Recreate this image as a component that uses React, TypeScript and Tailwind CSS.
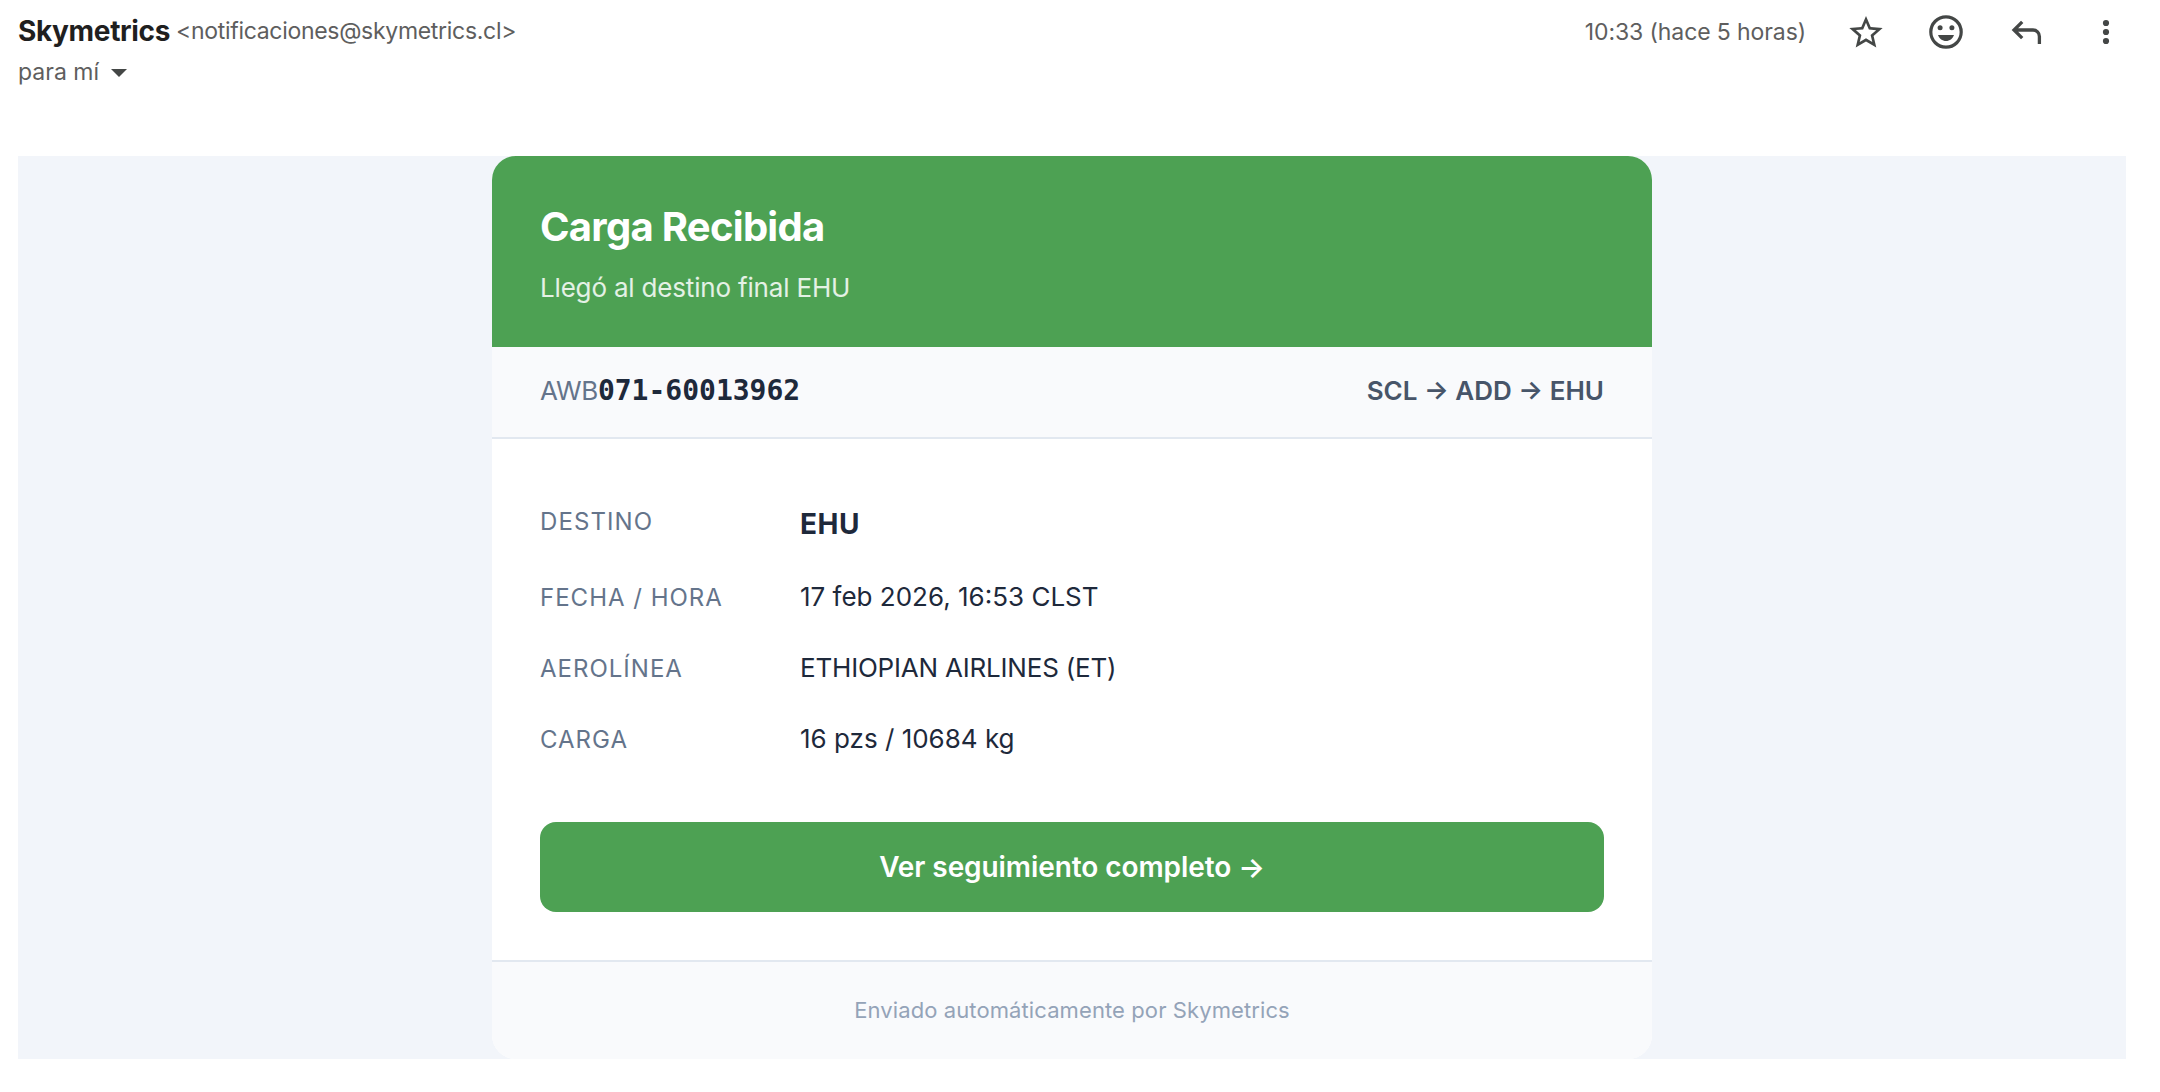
import { ReactNode } from "react";

type DetailRowProps = {
  label: string;
  value: string;
  highlight?: boolean;
};

const details: DetailRowProps[] = [
  { label: "Destino", value: "EHU", highlight: true },
  { label: "Fecha / Hora", value: "17 feb 2026, 16:53 CLST" },
  { label: "Aerolínea", value: "ETHIOPIAN AIRLINES (ET)" },
  { label: "Carga", value: "16 pzs / 10684 kg" },
];

function DetailRow({ label, value, highlight }: DetailRowProps) {
  if (highlight) {
    return (
      <div className="flex items-start py-4">
        <dt className="w-[260px] text-2xl leading-[38px] tracking-[1.1px] text-[#64748b] uppercase">
          {label}
        </dt>
        <dd className="text-[28px] leading-[42px] font-bold tracking-[0.5px]">{value}</dd>
      </div>
    );
  }

  return (
    <div className="flex items-baseline py-4">
      <dt className="w-[260px] text-2xl leading-9 tracking-[1px] text-[#64748b] uppercase">
        {label}
      </dt>
      <dd
        className={
          value === value.toUpperCase()
            ? "text-[26px] leading-[39px] tracking-[-0.2px]"
            : "text-[26px] leading-[39px]"
        }
      >
        {value}
      </dd>
    </div>
  );
}

function IconButton({ label, children }: { label: string; children: ReactNode }) {
  return (
    <button type="button" aria-label={label} className="size-10 text-[#444746]">
      <svg viewBox="0 0 40 40" className="size-10" fill="none" stroke="currentColor">
        {children}
      </svg>
    </button>
  );
}

function MailHeader() {
  return (
    <header className="flex h-[156px] items-start justify-between text-[23px] text-[#5e5e5e]">
      <div>
        <div className="flex h-[62px] items-center">
          <h2 className="text-[28px] font-bold tracking-[-0.35px] text-[#1f1f1f]">Skymetrics</h2>
          <span className="ml-[6px] tracking-[-0.3px]">&lt;notificaciones@skymetrics.cl&gt;</span>
        </div>
        <div className="flex h-5 items-center">
          <span>para mí</span>
          <svg viewBox="0 0 16 8" className="ml-3 mt-px h-2 w-4" fill="#444746">
            <path d="M0 0h16L8 8z" />
          </svg>
        </div>
      </div>
      <div className="flex h-16 items-center gap-10">
        <span className="tracking-[-0.1px]">10:33 (hace 5 horas)</span>
        <IconButton label="Destacar">
          <path
            transform="translate(0 .6) scale(1.6667)"
            d="M22 9.240l-7.190-.620L12 2 9.190 8.630 2 9.240l5.460 4.730L5.820 21 12 17.270 18.180 21l-1.630-7.030L22 9.240zM12 15.400l-3.760 2.270 1-4.280-3.320-2.880 4.380-.380L12 6.100l1.710 4.040 4.380.380-3.320 2.880 1 4.280L12 15.400z"
            fill="currentColor"
            stroke="none"
          />
        </IconButton>
        <IconButton label="Reaccionar">
          <circle cx="20" cy="20" r="15.2" strokeWidth="3.2" />
          <circle cx="14.1" cy="15.7" r="2.5" fill="currentColor" stroke="none" />
          <circle cx="25.9" cy="15.7" r="2.5" fill="currentColor" stroke="none" />
          <path d="M12 23h16c-1.2 3.7-4.4 6-8 6s-6.800-2.300-8-6z" fill="currentColor" stroke="none" />
        </IconButton>
        <IconButton label="Responder">
          <path d="M16.200 9.800L8 18l8.200 8.200M8 18h19a6.400 6.400 0 0 1 6.400 6.400V32" strokeWidth="3.3" />
        </IconButton>
        <IconButton label="Más">
          <g fill="currentColor" stroke="none">
            <circle cx="20" cy="11" r="3.1" />
            <circle cx="20" cy="20" r="3.1" />
            <circle cx="20" cy="29" r="3.1" />
          </g>
        </IconButton>
      </div>
    </header>
  );
}

export default function App() {
  return (
    <div className="min-h-screen bg-white pr-[34px] pl-[18px] font-[Inter,sans-serif]">
      <MailHeader />

      <main className="bg-[#f2f5fa]">
        <article className="mx-auto w-[1160px] overflow-hidden rounded-3xl bg-white text-[#1e293b]">
          <div className="h-[191px] bg-[#4da153] px-12 pt-12 text-white">
            <h1 className="text-[40px] leading-[45px] font-bold tracking-[-0.72px]">
              Carga Recibida
            </h1>
            <p className="mt-[19px] text-[26px] leading-[39px] tracking-[-0.18px] text-white/85">
              Llegó al destino final EHU
            </p>
          </div>

          <div className="flex h-[92px] items-baseline justify-between border-b-2 border-[#e2e8f0] bg-[#f9fafc] px-12 pt-6 text-[26px] leading-[39px]">
            <p className="flex items-baseline">
              <span className="tracking-[-0.4px] text-[#64748b]">AWB</span>
              <span className="font-['DejaVu_Sans_Mono',monospace] text-[28px] font-bold">
                071-60013962
              </span>
            </p>
            <p className="font-semibold text-[#475569]">SCL → ADD → EHU</p>
          </div>

          <div className="p-12">
            <dl>
              {details.map((detail) => (
                <DetailRow key={detail.label} {...detail} />
              ))}
            </dl>
            <a
              href="#"
              className="mt-12 flex h-[90px] items-center justify-center rounded-2xl bg-[#4da153] text-[28px] font-semibold tracking-[-0.08px] text-white"
            >
              Ver seguimiento completo →
            </a>
          </div>

          <footer className="border-t-2 border-[#e2e8f0] bg-[#f9fafc] py-8 text-center text-[22px] leading-[33px] tracking-[0.1px] text-[#94a3b8]">
            Enviado automáticamente por Skymetrics
          </footer>
        </article>
      </main>
    </div>
  );
}
